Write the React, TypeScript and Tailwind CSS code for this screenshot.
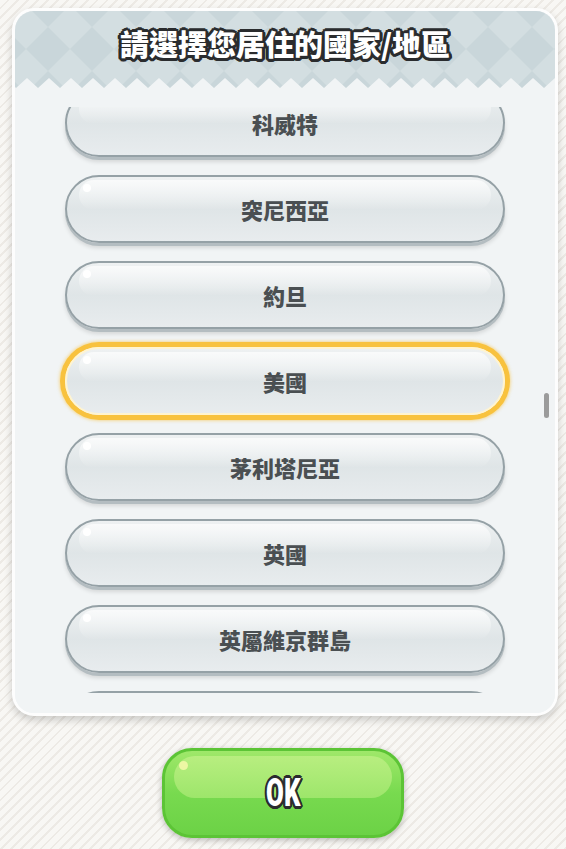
import React from "react";

const countries = [
  "科威特",
  "突尼西亞",
  "約旦",
  "美國",
  "茅利塔尼亞",
  "英國",
  "英屬維京群島",
  "",
];

const SELECTED = "美國";

const outline =
  "[text-shadow:2px_0_0_#2a2c2e,-2px_0_0_#2a2c2e,0_2px_0_#2a2c2e,0_-2px_0_#2a2c2e,2px_2px_0_#2a2c2e,-2px_-2px_0_#2a2c2e,2px_-2px_0_#2a2c2e,-2px_2px_0_#2a2c2e,3px_0_0_#2a2c2e,-3px_0_0_#2a2c2e,0_3px_0_#2a2c2e,0_-3px_0_#2a2c2e,3px_1px_0_#2a2c2e,-3px_1px_0_#2a2c2e,1px_3px_0_#2a2c2e,-1px_3px_0_#2a2c2e]";

// header diamonds + zigzag edge
function HeaderArt() {
  const teeth: string[] = [];
  const w = 540;
  const step = 22;
  let pts = `0,0 ${w},0 ${w},67`;
  for (let x = w; x > -step; x -= step) {
    teeth.push(`${x - step / 2},77 ${x - step},67`);
  }
  pts += " " + teeth.join(" ");
  return (
    <svg className="absolute inset-0" width="540" height="96" viewBox="0 0 540 96">
      <defs>
        <pattern id="dia" width="44" height="44" patternUnits="userSpaceOnUse" x="-11" y="-6">
          <rect width="44" height="44" fill="#c9d6da" />
          <polygon points="22,0 44,22 22,44 0,22" fill="#d3dee1" />
        </pattern>
        <clipPath id="zz">
          <polygon points={pts} />
        </clipPath>
      </defs>
      <rect width="540" height="96" fill="#f1f4f5" />
      <rect width="540" height="96" fill="url(#dia)" clipPath="url(#zz)" />
    </svg>
  );
}

function CountryButton({ name, selected }: { name: string; selected: boolean }) {
  return (
    <div
      className={`relative w-[440px] h-[68px] shrink-0 rounded-full border-2 bg-gradient-to-b from-[#eef1f2] via-[#dfe5e7] to-[#e8ecee] flex items-center justify-center ${
        selected
          ? "border-[#fff4d0] shadow-[0_0_0_5px_#f8c23e,0_0_3px_6px_rgba(248,194,62,0.5)]"
          : "border-[#95a1a6] shadow-[0_3px_0_#b4bdc1,0_5px_4px_rgba(0,0,0,0.12)]"
      }`}
    >
      <div className="absolute top-[3px] left-[12px] right-[12px] h-[30px] rounded-full bg-gradient-to-b from-white/70 to-white/0" />
      <div className="absolute top-[7px] left-[16px] w-[8px] h-[8px] rounded-full bg-white" />
      {name && (
        <span className="relative text-[22px] font-black text-[#4a4f52] [font-family:'Noto_Sans_CJK_TC','Noto_Sans_CJK_SC',sans-serif]">
          {name}
        </span>
      )}
    </div>
  );
}

export default function App() {
  return (
    <div className="min-h-[849px] w-[566px] overflow-hidden bg-[repeating-linear-gradient(135deg,#f8f7f4_0px,#f8f7f4_5px,#edeae5_5px,#edeae5_7px)] pt-2 [font-family:'Noto_Sans_CJK_TC',sans-serif]">
      <div className="ml-3 w-[546px] h-[708px] rounded-[22px] border-[3px] border-[#fdfdfd] bg-[#f1f4f5] shadow-[0_4px_8px_rgba(0,0,0,0.18)] overflow-hidden flex flex-col">
        <div className="relative h-[96px] shrink-0">
          <HeaderArt />
          <h1
            className={`relative pt-[14px] text-center text-[29px] leading-[36px] font-black text-white ${outline}`}
          >
            請選擇您居住的國家/地區
          </h1>
        </div>
        <div className="relative flex-1 overflow-hidden">
          <div className="-mt-[18px] flex flex-col items-center gap-[18px]">
            {countries.map((c, i) => (
              <CountryButton key={i} name={c} selected={c === SELECTED} />
            ))}
          </div>
          <div className="absolute right-[6px] top-[286px] w-[5px] h-[25px] rounded-full bg-[#9b9b9b]" />
        </div>
        <div className="h-[20px] shrink-0 bg-[#f1f4f5]" />
      </div>
      <div className="mt-[32px] flex justify-center">
        <div className="relative w-[242px] h-[90px] rounded-[30px] border-[3px] border-[#5cc436] bg-gradient-to-b from-[#9fe86a] via-[#78da4f] to-[#6cd246] shadow-[0_2px_6px_rgba(0,0,0,0.25)] flex items-center justify-center">
          <div className="absolute top-[5px] left-[9px] right-[9px] h-[42px] rounded-[22px] bg-gradient-to-b from-[#b8ee80] to-[#9de66b]" />
          <div className="absolute top-[10px] left-[14px] w-[9px] h-[9px] rounded-full bg-[#edf7a4]" />
          <span
            className={`relative scale-x-[0.68] text-[38px] leading-none font-black text-white [font-family:Roboto,sans-serif] ${outline}`}
          >
            OK
          </span>
        </div>
      </div>
    </div>
  );
}
